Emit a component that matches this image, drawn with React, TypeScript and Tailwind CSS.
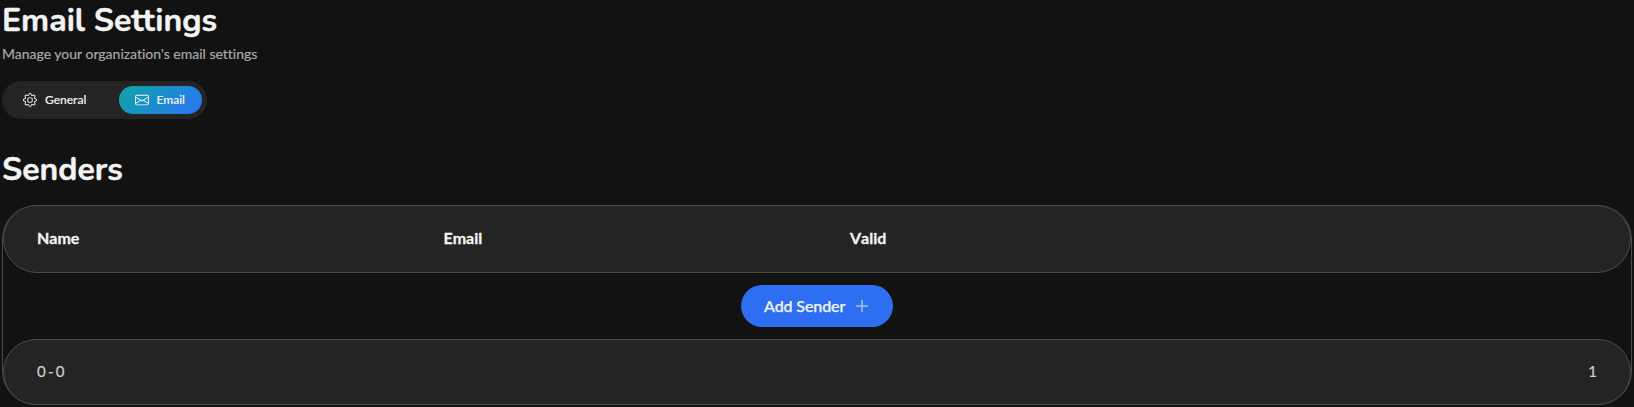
import React from "react";
import { BsEnvelope, BsGear } from "react-icons/bs";

const columns = ["Name", "Email", "Valid", ""];

function Heading({ children, className }: { children: React.ReactNode; className: string }) {
  return (
    <h1 className={`w-fit whitespace-nowrap font-[Nunito,Lato,sans-serif] text-[32px] font-bold text-[#f3f3f3] [-webkit-text-stroke:0.4px_#f3f3f3] ${className}`}>
      {children}
    </h1>
  );
}

export default function App() {
  return (
    <main className="h-[407px] overflow-hidden bg-[#121212] px-0.5 font-[Lato,sans-serif] text-[#f3f3f3]">
      <Heading className="mb-0.5 leading-[42px]">Email Settings</Heading>
      <p className="text-sm leading-5 text-[#a9a9a9] [font-variant-ligatures:none] [-webkit-text-stroke:0.2px_#a9a9a9]">Manage your organization's email settings</p>

      <nav className="mt-[17px] flex h-[38px] w-[205px] items-center justify-between rounded-full bg-[#242424] p-[5px] text-xs font-medium [-webkit-text-stroke:0.15px_#f3f3f3]">
        <button className="flex h-7 items-center gap-2 pl-4">
          <BsGear className="size-3.5" />
          General
        </button>
        <button className="flex h-7 w-[83px] items-center gap-[7.5px] rounded-full bg-linear-135 from-[#14a3a3] to-[#2f6ff4] pl-4">
          <BsEnvelope className="size-3.5" />
          Email
        </button>
      </nav>

      <Heading className="mt-[29px] leading-[44px]">Senders</Heading>

      <section className="mt-[13px] h-[200px] rounded-[34px] border-x border-[#4a4a4a]">
        <div className="grid h-[68px] grid-cols-4 items-center rounded-[34px] border border-[#4a4a4a] bg-[#242424] pb-0.5 font-bold [font-kerning:none] [-webkit-text-stroke:0.3px_#f3f3f3]">
          {columns.map((name, i) => (
            <span key={i} className="pl-[33px]">{name}</span>
          ))}
        </div>
        <div className="flex h-[66px] items-center justify-center">
          <button className="flex h-[42px] w-[152px] items-center rounded-full bg-[#2e6ff2] pl-[23px] font-medium tracking-[-0.1px] [-webkit-text-stroke:0.25px_#f3f3f3]">
            Add Sender
            <svg viewBox="0 0 12 12" className="ml-[11px] size-3 stroke-[#a8c0f8] [stroke-width:1.5]">
              <path d="M6 0V12M0 6H12" />
            </svg>
          </button>
        </div>
        <div className="flex h-[66px] items-center justify-between rounded-[34px] border border-[#4a4a4a] bg-[#242424] px-[33px] pb-px text-[15px] text-[#cfcfcf] [-webkit-text-stroke:0.2px_#cfcfcf]">
          <span className="[word-spacing:-1.6px]">0 - 0</span>
          <span>1</span>
        </div>
      </section>
    </main>
  );
}
